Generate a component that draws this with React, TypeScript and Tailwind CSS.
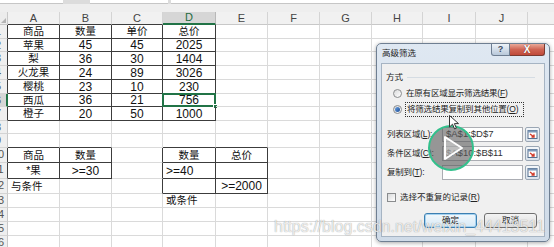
import React from 'react';

const cols = ['A', 'B', 'C', 'D', 'E', 'F', 'G', 'H', 'I', 'J', 'K'];
const colW = ['w-[52px]', 'w-[52px]', 'w-[51px]', 'w-[53px]', 'w-[52px]', 'w-[52px]', 'w-[52px]', 'w-[51px]', 'w-[53px]', 'w-[52px]', 'w-[60px]'];
const rowH = ['h-[14px]', 'h-[13px]', 'h-[14px]', 'h-[14px]', 'h-[14px]', 'h-[13px]', 'h-[14px]', 'h-[13px]', 'h-[14px]', 'h-[15px]', 'h-[16px]', 'h-[15px]', 'h-[14px]', 'h-[14px]', 'h-[14px]', 'h-[14px]'];

const data: Record<number, (string | null)[]> = {
    1: ['商品', '数量', '单价', '总价'],
    2: ['苹果', '45', '45', '2025'],
    3: ['梨', '36', '30', '1404'],
    4: ['火龙果', '24', '89', '3026'],
    5: ['樱桃', '23', '10', '230'],
    6: ['西瓜', '36', '21', '756'],
    7: ['橙子', '20', '50', '1000'],
    10: ['商品', '数量', null, '数量', '总价'],
    11: ['*果', '>=30', null, '>=40', null],
    12: ['与条件', null, null, null, '>=2000'],
    13: [null, null, null, '或条件'],
};
const leftAligned = ['11,3', '12,0', '13,3'];

// bordered ranges: A1:D7, A10:B11, D10:E12
const inTable = (r: number, c: number) =>
    (r >= 1 && r <= 7 && c >= 0 && c <= 3) ||
    (r >= 10 && r <= 11 && c >= 0 && c <= 1) ||
    (r >= 10 && r <= 12 && c >= 3 && c <= 4);

const isCjk = (s: string) => /[\u4e00-\u9fff]/.test(s);

function Sheet() {
    return (
        <div className="flex flex-col font-['Liberation_Sans','Noto_Sans_CJK_SC',sans-serif]">
            {/* formula bar remains */}
            <div className="flex h-[4px] bg-[#dcdcdc] gap-[3px]">
                <div className="w-[63px] bg-white border-b border-[#c6c6c6]" />
                <div className="w-[21px]" />
                <div className="w-[78px] bg-white border-b border-[#c6c6c6]" />
                <div className="flex-1 bg-white border-b border-[#c6c6c6]" />
            </div>
            <div className="h-[8px] bg-[#eeeeee]" />

            {/* column headers */}
            <div className="flex h-[13px]">
                <div className="w-[8px] shrink-0 bg-[#ececec] border-r border-b border-[#c8c8c8] relative">
                    <div className="absolute right-[1px] bottom-[1px] w-0 h-0 border-l-[5px] border-l-transparent border-b-[5px] border-b-[#b4b4b4]" />
                </div>
                {cols.map((c, i) => (
                    <div
                        key={c}
                        className={`${colW[i]} shrink-0 flex items-center justify-center text-[11px] leading-none border-r ${i === 3 ? 'bg-[#d6d6d6] text-[#1e6b3c] border-b-2 border-b-[#217346] border-r-[#b8b8b8]' : `bg-[#f1f1f1] text-[#444] border-b border-r-[#d4d4d4] ${inTable(1, i) ? 'border-b-[#3c3c3c]' : 'border-b-[#c8c8c8]'}`}`}
                    >
                        {c}
                    </div>
                ))}
            </div>

            {rowH.map((h, ri) => {
                const r = ri + 1;
                const row = data[r] || [];
                return (
                    <div key={r} className={`flex ${h}`}>
                        <div
                            className={`w-[8px] shrink-0 overflow-hidden border-b border-b-[#d4d4d4] ${r === 6 ? 'bg-[#d6d6d6] border-r-2 border-r-[#217346]' : `bg-[#efefef] border-r ${inTable(r, 0) ? 'border-r-[#3c3c3c]' : 'border-r-[#c8c8c8]'}`}`}
                        >
                            <div className="w-[26px] ml-[-15px] text-center text-[11px] leading-[13px] text-[#555]">{r}</div>
                        </div>
                        {cols.map((c, ci) => {
                            const t = row[ci];
                            const right = inTable(r, ci) || inTable(r, ci + 1);
                            const bottom = inTable(r, ci) || inTable(r + 1, ci);
                            const left = leftAligned.includes(`${r},${ci}`);
                            return (
                                <div
                                    key={c}
                                    className={`${colW[ci]} shrink-0 relative flex items-center border-r border-b text-[#111] whitespace-nowrap ${left ? 'justify-start pl-[3px]' : 'justify-center'} ${right ? 'border-r-[#3c3c3c]' : 'border-r-[#dadada]'} ${bottom ? 'border-b-[#3c3c3c]' : 'border-b-[#dadada]'}`}
                                >
                                    {t && (
                                        <span className={`${isCjk(t) ? 'text-[10.5px]' : 'text-[12px]'} leading-none`}>{t}</span>
                                    )}
                                    {r === 6 && ci === 3 && (
                                        <>
                                            <div className="absolute left-[-1px] top-[-1px] right-[-1px] bottom-[-1px] border-2 border-[#217346]" />
                                            <div className="absolute right-[-3px] bottom-[-3px] w-[5px] h-[5px] bg-[#217346] border border-white" />
                                        </>
                                    )}
                                </div>
                            );
                        })}
                    </div>
                );
            })}
        </div>
    );
}

function Radio({ checked }: { checked?: boolean }) {
    return (
        <div className="w-[9px] h-[9px] shrink-0 rounded-full border border-[#8a8c8e] bg-gradient-to-br from-[#d9dadb] to-white flex items-center justify-center">
            {checked && <div className="w-[5px] h-[5px] rounded-full bg-gradient-to-br from-[#6aa0e0] to-[#1b4d97]" />}
        </div>
    );
}

function RangeButton() {
    return (
        <div className="w-[15px] h-[15px] shrink-0 ml-[2px] rounded-[2px] border border-[#9aa6b4] bg-gradient-to-b from-[#f4f7fa] to-[#dbe3ec] flex items-center justify-center">
            <svg width="11" height="11" viewBox="0 0 11 11">
                <rect x="1" y="1.5" width="9" height="8" fill="#fff" stroke="#56708f" strokeWidth="1" />
                <rect x="1" y="1.5" width="9" height="2" fill="#7d98b8" />
                <path d="M3 5 L7 8 M7 5.5 L7 8 L4.5 8" stroke="#d23b2a" strokeWidth="1.4" fill="none" />
            </svg>
        </div>
    );
}

function Field({ label, k, value }: { label: string; k: string; value: string }) {
    return (
        <div className="flex items-center h-[15px] mt-[4px]">
            <div className="w-[55px] shrink-0 ml-[1px] text-[8.5px] tracking-[-0.2px] text-[#222] whitespace-nowrap">
                {label}(<u>{k}</u>):
            </div>
            <div className="w-[81px] shrink-0 h-[15px] border border-[#abadb3] bg-white pl-[3px] flex items-center text-[9.5px] text-[#333]">
                {value}
            </div>
            <RangeButton />
        </div>
    );
}

function Dialog() {
    return (
        <div className="absolute left-[376px] top-[43px] w-[174px] h-[199px] rounded-[5px] border border-[#6f7f92] bg-gradient-to-b from-[#dfe8f2] to-[#cfdbe8] shadow-[0_1px_4px_rgba(0,0,0,0.35)] flex flex-col font-['Liberation_Sans','Noto_Sans_CJK_SC',sans-serif]">
            <div className="flex h-[19px] items-start">
                <div className="pl-[5px] pt-[4px] text-[8.5px] leading-[11px] text-[#1e1e1e]">高级筛选</div>
                <div className="ml-auto mr-[4px] flex">
                    <div className="w-[19px] h-[12px] rounded-bl-[3px] border border-t-0 border-[#6d7d91] bg-gradient-to-b from-[#eef3f8] to-[#b8c8da] flex items-center justify-center text-[9px] leading-none text-[#3a4a5e] font-bold">
                        ?
                    </div>
                    <div className="w-[35px] h-[12px] rounded-br-[3px] border border-t-0 border-l-0 border-[#7a3a30] bg-gradient-to-b from-[#e9a898] via-[#cf6453] to-[#c04a3a] flex items-center justify-center text-[10px] leading-none text-white font-bold [text-shadow:0_0_1px_#5a1a10]">
                        X
                    </div>
                </div>
            </div>
            <div className="mx-[4px] h-[174px] border border-[#a6b4c3] bg-[#f0f0f0] px-[4px] pt-[6px] flex flex-col text-[#222]">
                <div className="flex items-center h-[14px]">
                    <span className="text-[8.5px]">方式</span>
                    <div className="flex-1 ml-[4px] mr-[5px] h-px bg-[#d5dce3]" />
                </div>
                <div className="flex items-center h-[16px] mt-[1px] pl-[7px]">
                    <Radio />
                    <span className="ml-[4px] text-[8.5px] tracking-[-0.2px] whitespace-nowrap">在原有区域显示筛选结果(<u>F</u>)</span>
                </div>
                <div className="flex items-center h-[16px] pl-[7px]">
                    <Radio checked />
                    <span className="ml-[3px] w-[119px] h-[15px] border border-dotted border-[#333] pl-[1px] flex items-center text-[8.5px] tracking-[-0.2px] whitespace-nowrap">
                        将筛选结果复制到其他位置(<u>O</u>)
                    </span>
                </div>
                <div className="mt-[6px]" />
                <Field label="列表区域" k="L" value="$A$1:$D$7" />
                <Field label="条件区域" k="C" value="$A$10:$B$11" />
                <Field label="复制到" k="T" value="" />
                <div className="flex items-center h-[14px] mt-[10px] pl-[1px]">
                    <div className="w-[9px] h-[9px] border border-[#8a8c8e] bg-gradient-to-br from-[#d9dadb] to-white" />
                    <span className="ml-[4px] text-[8.5px] whitespace-nowrap">选择不重复的记录(<u>R</u>)</span>
                </div>
                <div className="flex justify-end gap-[7px] mt-[9px] mr-[3px]">
                    <div className="w-[53px] h-[15px] rounded-[3px] border border-[#3c7fb1] bg-gradient-to-b from-[#f2f8fc] to-[#d6e9f6] shadow-[inset_0_0_0_1px_#a6d3f0] flex items-center justify-center text-[8.5px]">
                        确定
                    </div>
                    <div className="w-[53px] h-[15px] rounded-[3px] border border-[#707070] bg-gradient-to-b from-[#f4f4f4] to-[#dcdcdc] flex items-center justify-center text-[8.5px]">
                        取消
                    </div>
                </div>
            </div>
        </div>
    );
}

export default function App() {
    return (
        <div className="relative w-[554px] h-[247px] overflow-hidden bg-white">
            <Sheet />
            <Dialog />

            {/* video play overlay */}
            <div className="absolute left-[428px] top-[125px] w-[46px] h-[46px] rounded-full border-2 border-[#33c08c] bg-[#5a5a5a99]">
                <svg width="42" height="42" viewBox="0 0 42 42" className="absolute left-0 top-0">
                    <polygon points="15,10 15,32 32,21" fill="rgba(255,255,255,0.35)" stroke="#fff" strokeWidth="2" strokeLinejoin="round" />
                </svg>
            </div>

            {/* mouse cursor */}
            <svg width="12" height="16" viewBox="0 0 12 16" className="absolute left-[449px] top-[115px]">
                <path d="M0.5 0.5 L0.5 12 L3.5 9.2 L5.6 14 L7.4 13.2 L5.4 8.6 L9.5 8.6 Z" fill="#fff" stroke="#333" strokeWidth="1" strokeLinejoin="round" />
            </svg>

            {/* watermark */}
            <div className="absolute left-[274px] top-[218px] text-[16px] leading-[18px] whitespace-nowrap font-['Liberation_Sans',sans-serif] text-[#ffffffcc] [text-shadow:0_0_1px_rgba(0,0,0,0.45)]">
                https://blog.csdn.net/weixin_44413511
            </div>
        </div>
    );
}
